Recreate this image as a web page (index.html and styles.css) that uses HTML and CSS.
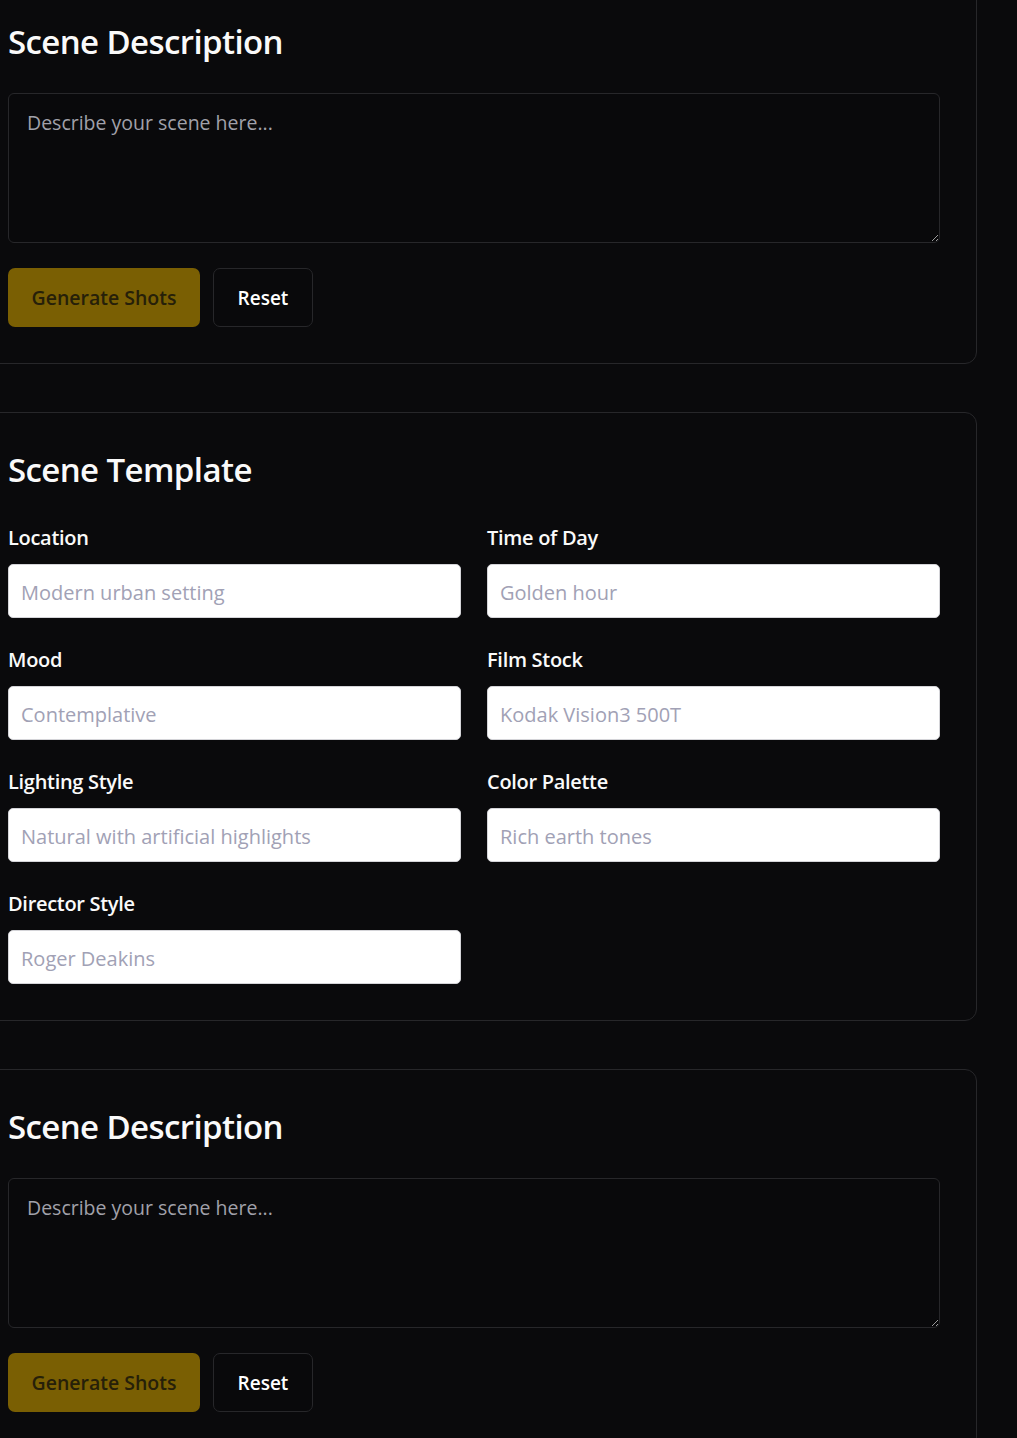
FILE: index.html
```html
<!DOCTYPE html>
<html lang="en">
<head>
<meta charset="utf-8">
<title>Scene Builder</title>
<link rel="stylesheet" href="styles.css">
</head>
<body>
<div class="page">
  <section class="card">
    <h2 class="card-title">Scene Description</h2>
    <textarea class="scene-text" placeholder="Describe your scene here..."></textarea>
    <div class="actions">
      <button class="btn btn-primary" disabled>Generate Shots</button>
      <button class="btn btn-outline">Reset</button>
    </div>
  </section>

  <section class="card">
    <h2 class="card-title title-template">Scene Template</h2>
    <div class="fields">
      <label class="field"><span class="field-label">Location</span><input class="field-input" placeholder="Modern urban setting"></label>
      <label class="field"><span class="field-label">Time of Day</span><input class="field-input" placeholder="Golden hour"></label>
      <label class="field"><span class="field-label">Mood</span><input class="field-input" placeholder="Contemplative"></label>
      <label class="field"><span class="field-label">Film Stock</span><input class="field-input" placeholder="Kodak Vision3 500T"></label>
      <label class="field"><span class="field-label">Lighting Style</span><input class="field-input" placeholder="Natural with artificial highlights"></label>
      <label class="field"><span class="field-label">Color Palette</span><input class="field-input" placeholder="Rich earth tones"></label>
      <label class="field"><span class="field-label">Director Style</span><input class="field-input" placeholder="Roger Deakins"></label>
    </div>
  </section>

  <section class="card">
    <h2 class="card-title">Scene Description</h2>
    <textarea class="scene-text" placeholder="Describe your scene here..."></textarea>
    <div class="actions">
      <button class="btn btn-primary" disabled>Generate Shots</button>
      <button class="btn btn-outline">Reset</button>
    </div>
  </section>
</div>
</body>
</html>
```

FILE: styles.css
```css
html, body {
  margin: 0;
  padding: 0;
  background: #0a0a0c;
  color: #fafafa;
  font-family: "Open Sans", "Noto Sans", "Liberation Sans", sans-serif;
  overflow: hidden;
}

.page {
  margin: -16px 0 0 -29px;
  width: 1006px;
  display: flex;
  flex-direction: column;
  gap: 48px;
}

.card {
  border: 1px solid #27272a;
  border-radius: 12px;
  padding: 36px;
  background: #0a0a0c;
}

.card-title {
  margin: 0 0 30px;
  font-size: 33px;
  line-height: 42px;
  font-weight: 600;
  letter-spacing: -0.6px;
  color: #fafafa;
}

.title-template {
  margin-bottom: 33px;
}

.scene-text {
  display: block;
  box-sizing: border-box;
  width: 100%;
  height: 150px;
  margin: 0;
  padding: 15px 18px;
  border: 1px solid #27272a;
  border-radius: 6px;
  background: #09090b;
  color: #fafafa;
  font-family: inherit;
  font-size: 19.5px;
  line-height: 28px;
  resize: vertical;
}

.scene-text::placeholder {
  color: #a1a1aa;
}

.actions {
  display: flex;
  gap: 13px;
  margin-top: 25px;
}

.btn {
  box-sizing: border-box;
  height: 59px;
  border-radius: 7px;
  font-family: inherit;
  font-size: 19px;
  font-weight: 600;
  padding: 0 20px;
  cursor: pointer;
}

.btn-primary {
  width: 192px;
  border: none;
  background: #7a5f03;
  color: #262009;
  font-size: 19.5px;
}

.btn-outline {
  width: 100px;
  border: 1px solid #27272a;
  background: #09090b;
  color: #ffffff;
}

.fields {
  display: grid;
  grid-template-columns: 1fr 1fr;
  column-gap: 26px;
  row-gap: 28px;
}

.field {
  display: flex;
  flex-direction: column;
  gap: 12px;
}

.field-label {
  font-size: 20px;
  line-height: 28px;
  font-weight: 600;
  letter-spacing: -0.3px;
  color: #fafafa;
}

.field-input {
  box-sizing: border-box;
  height: 54px;
  width: 100%;
  margin: 0;
  padding: 2px 12px 0;
  border: 1px solid #d4d4d8;
  border-radius: 5px;
  background: #ffffff;
  color: #18181b;
  font-family: inherit;
  font-size: 20px;
}

.field-input::placeholder {
  color: #a1a1b5;
}
```
